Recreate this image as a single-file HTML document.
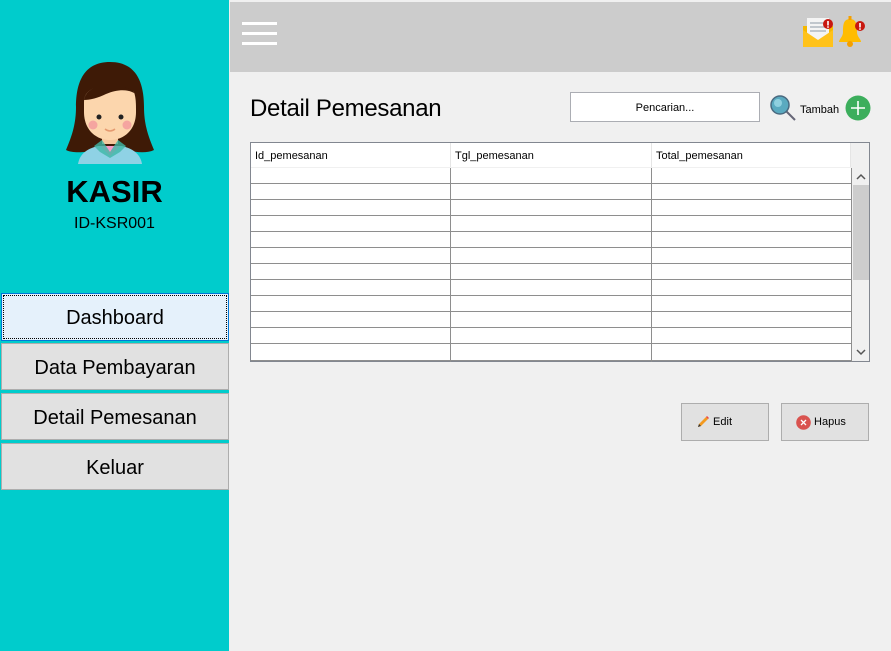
<!DOCTYPE html>
<html><head><meta charset="utf-8"><style>
*{margin:0;padding:0;box-sizing:border-box}
body{width:891px;height:651px;background:#f0f0f0;position:relative;overflow:hidden;font-family:"Liberation Sans",sans-serif}
.abs{position:absolute}
.side{left:0;top:0;width:229px;height:651px;background:#00cccc}
.top{left:230px;top:2px;width:661px;height:70px;background:#cccccc}
.btn{position:absolute;left:1px;width:228px;height:47px;background:#e1e1e1;border:1px solid #adadad;font-size:20px;text-align:center;line-height:49px;color:#000}
.tbl{left:250px;top:142px;width:620px;height:220px;border:1px solid #828790;background:#f0f0f0}
.hdr{position:absolute;top:0;height:24px;background:#fff;border-right:1px solid #e5e5e5;font-size:11px;line-height:27px;padding-left:4px}
.row{position:absolute;left:0;width:600px;height:16px;border-bottom:1px solid #8e8e8e;background:#fff}
.vl{position:absolute;top:25px;width:1px;height:194px;background:#8e8e8e}
</style></head><body>
<div class="abs side"></div>
<div class="abs top"></div>
<div class="abs" style="left:242px;top:22px;width:35px;height:3px;background:#fff"></div>
<div class="abs" style="left:242px;top:32px;width:35px;height:3px;background:#fff"></div>
<div class="abs" style="left:242px;top:42px;width:35px;height:3px;background:#fff"></div>
<!-- mail -->
<svg class="abs" style="left:800px;top:14px" width="36" height="36" viewBox="0 0 34 36">
<rect x="2" y="12" width="30" height="21" fill="#f5b800"/>
<rect x="6" y="4" width="22" height="22" fill="#f4f4f4"/>
<path d="M9 9h14M9 13h16M9 17h16" stroke="#b0b8c0" stroke-width="1.5"/>
<path d="M2 16 L17 26 L32 16 V33 H2Z" fill="#ffc21a"/>
<circle cx="27" cy="10" r="5" fill="#c8170f"/><rect x="26.2" y="7" width="1.6" height="4.5" fill="#fff"/><rect x="26.2" y="12.3" width="1.6" height="1.5" fill="#fff"/>
</svg>
<!-- bell -->
<svg class="abs" style="left:836px;top:14px" width="34" height="36" viewBox="0 0 34 36">
<path d="M14 5 C7 5 7 12 7 18 C7 23 3 25 3 28 H25 C25 25 21 23 21 18 C21 12 21 5 14 5Z" fill="#ffbc00"/>
<circle cx="14" cy="30" r="3" fill="#f5a000"/><rect x="12.5" y="2" width="3" height="4" fill="#f5a000"/>
<circle cx="24" cy="12" r="5" fill="#c8170f"/><rect x="23.2" y="9" width="1.6" height="4.5" fill="#fff"/><rect x="23.2" y="14.3" width="1.6" height="1.5" fill="#fff"/>
</svg>
<!-- avatar -->
<svg class="abs" style="left:64px;top:62px" width="92" height="102" viewBox="0 0 92 102">
<path d="M46 0 C20 0 12 20 12 45 C12 65 6 78 2 88 C10 92 24 90 30 88 L62 88 C70 90 82 92 90 88 C86 78 80 65 80 45 C80 20 72 0 46 0Z" fill="#3e1a06"/>
<rect x="38" y="66" width="16" height="16" fill="#f6c79d"/>
<path d="M20 40 C20 30 28 26 36 25 C48 25 60 26 70 30 C72 36 72 42 72 50 C72 68 60 78 46 78 C32 78 20 68 20 50Z" fill="#fcd6ad"/>
<path d="M20 38 C22 26 36 22 52 24 C60 24 66 26 72 32 C66 28 56 26 42 32 C34 36 26 38 20 38Z" fill="#3e1a06"/>
<circle cx="35" cy="55" r="2.5" fill="#222"/><circle cx="57" cy="55" r="2.5" fill="#222"/>
<circle cx="29" cy="63" r="4.5" fill="#f5a5a0"/><circle cx="63" cy="63" r="4.5" fill="#f5a5a0"/>
<path d="M41 67 Q46 71 51 67" stroke="#e59a70" stroke-width="1.5" fill="none"/>
<path d="M14 102 C16 90 26 86 34 84 L58 84 C66 86 76 90 78 102Z" fill="#8fd2e5"/>
<path d="M36 84 L46 94 L56 84 Z" fill="#f59ac8"/>
<path d="M30 84 L38 78 L46 90 L54 78 L62 84 L56 90 L46 96 L36 90Z" fill="#3fb8a6" opacity="0.8"/>
</svg>
<div class="abs" style="left:0;top:174px;width:229px;text-align:center;font-size:31px;font-weight:bold;color:#000">KASIR</div>
<div class="abs" style="left:0;top:215px;width:229px;text-align:center;font-size:16px;color:#000">ID-KSR001</div>
<div class="btn" style="top:293px;height:48px;background:#e5f1fb;border:1px solid #0078d7;outline:1px dotted #000;outline-offset:-3px">Dashboard</div>
<div class="btn" style="top:343px">Data Pembayaran</div>
<div class="btn" style="top:393px">Detail Pemesanan</div>
<div class="btn" style="top:443px">Keluar</div>

<div class="abs" style="left:250px;top:95px;font-size:24px;color:#000;letter-spacing:-0.3px">Detail Pemesanan</div>
<div class="abs" style="left:570px;top:92px;width:190px;height:30px;background:#fff;border:1px solid #abadb3;font-size:11px;text-align:center;line-height:30px">Pencarian...</div>
<svg class="abs" style="left:769px;top:94px" width="28" height="28" viewBox="0 0 28 28">
<line x1="16" y1="16" x2="26" y2="26" stroke="#667" stroke-width="2"/>
<circle cx="11" cy="11" r="9" fill="#5aaac0" stroke="#4a6a80" stroke-width="1.5"/>
<circle cx="9" cy="9" r="4" fill="#8fd0df"/>
</svg>
<div class="abs" style="left:800px;top:104px;font-size:11px">Tambah</div>
<svg class="abs" style="left:845px;top:95px" width="26" height="26"><circle cx="13" cy="13" r="12.5" fill="#3cae5c"/><path d="M13 6v14M6 13h14" stroke="#fff" stroke-width="1.6"/></svg>

<div class="abs tbl">
<div class="hdr" style="left:0;width:200px">Id_pemesanan</div>
<div class="hdr" style="left:200px;width:201px">Tgl_pemesanan</div>
<div class="hdr" style="left:401px;width:199px">Total_pemesanan</div>
<div class="row" style="top:25px"></div><div class="row" style="top:41px"></div><div class="row" style="top:57px"></div><div class="row" style="top:73px"></div><div class="row" style="top:89px"></div><div class="row" style="top:105px"></div><div class="row" style="top:121px"></div><div class="row" style="top:137px"></div><div class="row" style="top:153px"></div><div class="row" style="top:169px"></div><div class="row" style="top:185px"></div><div class="row" style="top:201px;height:17px"></div>
<div class="vl" style="left:199px"></div><div class="vl" style="left:400px"></div><div class="vl" style="left:600px"></div>
<div class="abs" style="left:601px;top:25px;width:17px;height:193px;background:#f0f0f0"></div>
<div class="abs" style="left:602px;top:42px;width:16px;height:95px;background:#cdcdcd"></div>
<svg class="abs" style="left:605px;top:30px" width="10" height="8"><path d="M1 6 L5 2 L9 6" stroke="#555" stroke-width="1.5" fill="none"/></svg>
<svg class="abs" style="left:605px;top:205px" width="10" height="8"><path d="M1 2 L5 6 L9 2" stroke="#555" stroke-width="1.5" fill="none"/></svg>
</div>

<div class="abs" style="left:681px;top:403px;width:88px;height:38px;background:#e1e1e1;border:1px solid #adadad;font-size:11px;line-height:36px;padding-left:14px">
<svg style="vertical-align:middle" width="14" height="14"><path d="M2 12 L3 9 L10 2 L12 4 L5 11Z" fill="#f39a1f"/><path d="M10 2 L12 4 L13 3 L11 1Z" fill="#e44"/><path d="M2 12 L3 9 L5 11Z" fill="#333"/></svg> Edit</div>
<div class="abs" style="left:781px;top:403px;width:88px;height:38px;background:#e1e1e1;border:1px solid #adadad;font-size:11px;line-height:36px;padding-left:14px">
<svg style="vertical-align:middle" width="15" height="15"><circle cx="7.5" cy="7.5" r="7.3" fill="#d9534f"/><path d="M5 5l5 5M10 5l-5 5" stroke="#fff" stroke-width="1.3"/></svg> Hapus</div>
</body></html>
